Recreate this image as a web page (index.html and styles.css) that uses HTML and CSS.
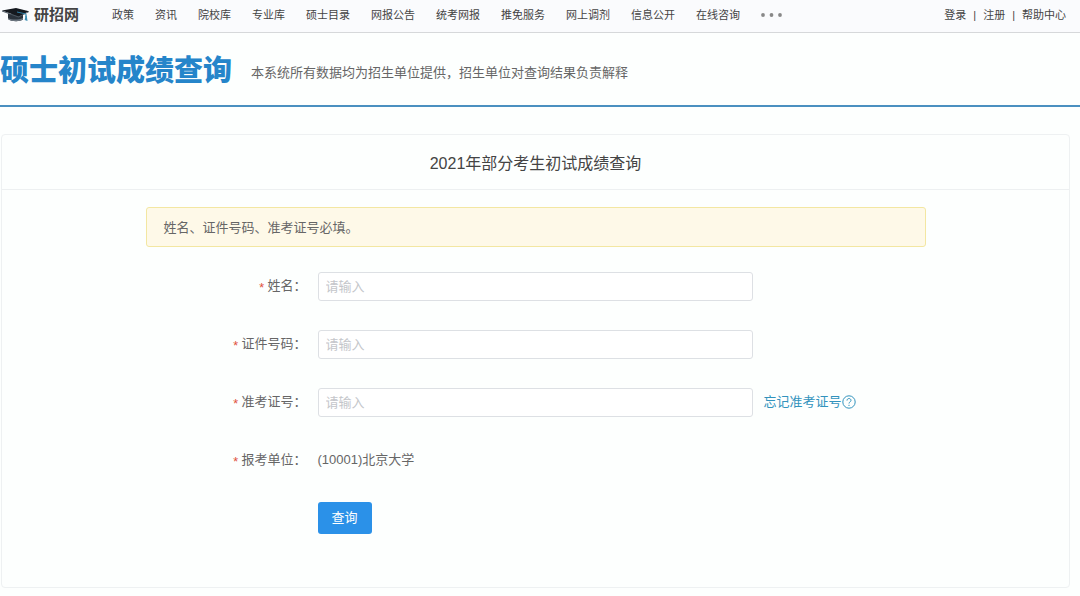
FILE: index.html
```html
<!DOCTYPE html>
<html lang="zh-CN">
<head>
<meta charset="utf-8">
<meta name="viewport" content="width=device-width, initial-scale=1">
<title>硕士初试成绩查询</title>
<link rel="stylesheet" href="styles.css">
</head>
<body>
<header class="topbar">
  <a class="logo" href="#">
    <svg class="logo-mark" viewBox="0 0 28 16" aria-hidden="true">
      <path d="M6 7v5c3 2.600 11 3.200 15 .6V7z" fill="#2a323b"/>
      <path d="M6 11c4 2 10 2 15 0v1.600c-4 2.600-12 2-15-.6z" fill="#6c7680"/>
      <path d="M0 3.500 14 1l13 3.200L16.500 9.500z" fill="#15191f"/>
      <path d="M0 3.500 16.500 9.500 27 4.200v.9L16.500 10.600 0 4.600z" fill="#4c5762"/>
      <path d="M15 5l9 2v3" fill="none" stroke="#2f7fa6" stroke-width="1"/>
      <path d="M23.500 8.500h1.200l.8 5.500-2.800-1z" fill="#3b8db2"/>
    </svg>
    <span class="logo-text">研招网</span>
  </a>
  <nav class="nav" aria-label="主导航">
    <a href="#">政策</a>
    <a href="#">资讯</a>
    <a href="#">院校库</a>
    <a href="#">专业库</a>
    <a href="#">硕士目录</a>
    <a href="#">网报公告</a>
    <a href="#">统考网报</a>
    <a href="#">推免服务</a>
    <a href="#">网上调剂</a>
    <a href="#">信息公开</a>
    <a href="#">在线咨询</a>
    <button class="more" type="button" aria-label="更多">
      <svg class="more-icon" viewBox="0 0 22 4" aria-hidden="true"><circle cx="2" cy="2" r="1.900"/><circle cx="10.500" cy="2" r="1.900"/><circle cx="19" cy="2" r="1.900"/></svg>
    </button>
  </nav>
  <div class="account">
    <a href="#">登录</a><span>|</span><a href="#">注册</a><span>|</span><a href="#">帮助中心</a>
  </div>
</header>
<div class="banner">
  <h1 class="banner-title">硕士初试成绩查询</h1>
  <p class="banner-note">本系统所有数据均为招生单位提供，招生单位对查询结果负责解释</p>
</div>
<main class="card">
  <h2 class="card-title">2021年部分考生初试成绩查询</h2>
  <div class="card-body">
    <p class="notice">姓名、证件号码、准考证号必填。</p>
    <form class="form">
      <div class="row">
        <label class="label" for="name"><span class="star">*</span>姓名：</label>
        <input class="field" id="name" type="text" placeholder="请输入">
      </div>
      <div class="row">
        <label class="label" for="idno"><span class="star">*</span>证件号码：</label>
        <input class="field" id="idno" type="text" placeholder="请输入">
      </div>
      <div class="row">
        <label class="label" for="ticket"><span class="star">*</span>准考证号：</label>
        <input class="field" id="ticket" type="text" placeholder="请输入">
        <a class="forgot" href="#">忘记准考证号<svg class="help" viewBox="0 0 14 14" aria-hidden="true"><circle cx="7" cy="7" r="6.200"/><path d="M5 5.600C5 4.300 5.900 3.500 7 3.500s2 .8 2 1.900C9 6.800 7 6.900 7 8.500M7 9.800v1.200"/></svg></a>
      </div>
      <div class="row">
        <span class="label"><span class="star">*</span>报考单位：</span>
        <span class="value">(10001)北京大学</span>
      </div>
      <div class="row">
        <button class="submit" type="submit">查询</button>
      </div>
    </form>
  </div>
</main>
</body>
</html>
```
FILE: styles.css
```css
* {
  box-sizing: border-box;
}

body {
  margin: 0;
  background: #fdfffe;
  color: #666;
  font: 13px/20px "Liberation Sans", "Noto Sans CJK SC", sans-serif;
}

h1,
h2,
p {
  margin: 0;
}

a {
  color: inherit;
  text-decoration: none;
}

button,
input {
  font: inherit;
}

.topbar {
  display: flex;
  align-items: center;
  height: 33px;
  padding: 0 14px 2px 2px;
  border-bottom: 1px solid #d6d8da;
  background: #fafbfd;
  color: #444;
  font-size: 11px;
  white-space: nowrap;
}

.logo {
  display: flex;
  align-items: center;
  gap: 4px;
}

.logo-mark {
  width: 28px;
  height: 16px;
}

.logo-text {
  color: #444;
  font-size: 15px;
  font-weight: bold;
}

.nav {
  display: flex;
  align-items: center;
  gap: 21px;
  margin-left: 33px;
}

.more {
  display: flex;
  padding: 0;
  border: 0;
  background: none;
}

.more-icon {
  width: 22px;
  height: 4px;
  fill: #888;
}

.account {
  display: flex;
  gap: 7px;
  margin-left: auto;
}

.banner {
  display: flex;
  align-items: center;
  gap: 19px;
  padding: 18px 0 14px;
  border-bottom: 2px solid #4a90c0;
}

.banner-title {
  color: #2585ca;
  font-size: 29px;
  font-weight: 900;
  line-height: 40px;
}

.banner-note {
  padding-top: 4px;
  color: #666;
}

.card {
  margin: 27px 10px 8px 1px;
  border: 1px solid #eef1f2;
  border-radius: 4px;
}

.card-title {
  padding: 18px 16px 14px;
  border-bottom: 1px solid #edf0f1;
  color: #444;
  font-size: 16px;
  font-weight: normal;
  line-height: 22px;
  text-align: center;
}

.card-body {
  max-width: 780px;
  margin: 0 auto;
  padding: 17px 0 53px;
}

.notice {
  padding: 10px 17px 8px;
  border: 1px solid #f3e7a2;
  border-radius: 3px;
  background: #fef9e8;
}

.form {
  display: grid;
  gap: 26px;
  margin-top: 23px;
}

.row {
  display: grid;
  grid-template-columns: 161px minmax(0, 435px) 1fr;
  column-gap: 11px;
  align-items: center;
  height: 32px;
}

.label {
  text-align: right;
}

.star {
  margin-right: 2px;
  color: #e0543f;
  font-family: "Liberation Mono", monospace;
  line-height: 1;
  vertical-align: -2px;
}

.field {
  width: 100%;
  height: 29px;
  padding: 0 7px;
  border: 1px solid #dde0e4;
  border-radius: 3px;
  background: #fff;
  color: #555;
}

.field::placeholder {
  color: #c4c6ca;
}

.forgot {
  display: flex;
  align-items: center;
  color: #3293bd;
  white-space: nowrap;
}

.help {
  width: 14px;
  height: 14px;
  fill: none;
  stroke: currentColor;
}

.submit {
  grid-column: 2;
  justify-self: start;
  height: 32px;
  padding: 0 14px;
  border: 0;
  border-radius: 3px;
  background: #2b91e8;
  color: #fff;
}
```
